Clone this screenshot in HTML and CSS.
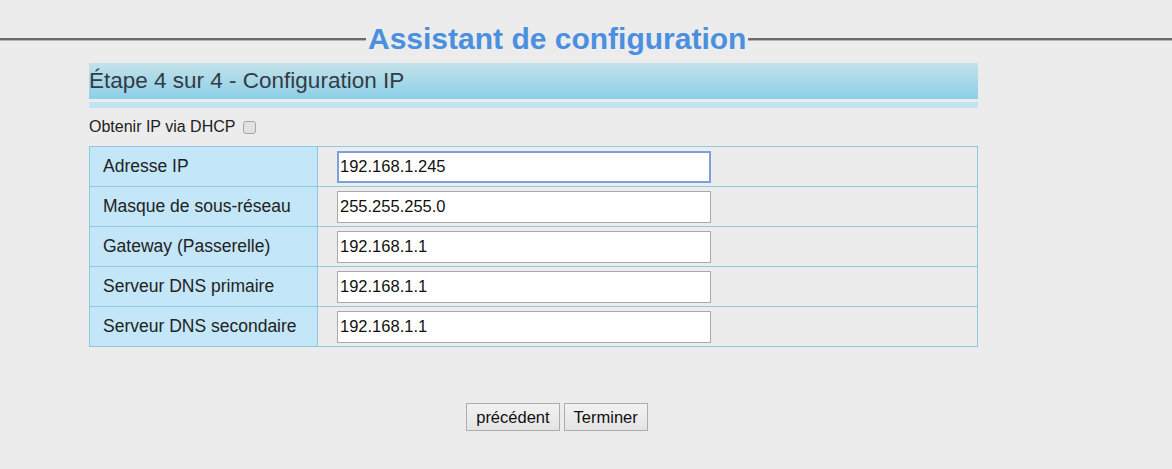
FILE: index.html
```html
<!DOCTYPE html>
<html lang="fr">
<head>
    <meta charset="UTF-8">
    <title>Assistant de configuration</title>
    <link rel="stylesheet" href="styles.css">
</head>
<body>
    <div class="wizard-title">
        <span class="rule rule-left"></span>
        <h1>Assistant de configuration</h1>
        <span class="rule rule-right"></span>
    </div>

    <div class="step">
        <div class="step-head">Étape 4 sur 4 - Configuration IP</div>
        <div class="step-strip"></div>

        <label class="dhcp">Obtenir IP via DHCP <input type="checkbox"></label>

        <table class="ip-table">
            <tr>
                <td class="lbl">Adresse IP</td>
                <td class="val"><input type="text" class="focus" value="192.168.1.245"></td>
            </tr>
            <tr>
                <td class="lbl">Masque de sous-réseau</td>
                <td class="val"><input type="text" value="255.255.255.0"></td>
            </tr>
            <tr>
                <td class="lbl">Gateway (Passerelle)</td>
                <td class="val"><input type="text" value="192.168.1.1"></td>
            </tr>
            <tr>
                <td class="lbl">Serveur DNS primaire</td>
                <td class="val"><input type="text" value="192.168.1.1"></td>
            </tr>
            <tr>
                <td class="lbl">Serveur DNS secondaire</td>
                <td class="val"><input type="text" value="192.168.1.1"></td>
            </tr>
        </table>
    </div>

    <div class="actions">
        <button class="btn">précédent</button>
        <button class="btn">Terminer</button>
    </div>
</body>
</html>
```

FILE: styles.css
```css
* {
    margin: 0;
    padding: 0;
    box-sizing: border-box;
}

body {
    font-family: "Liberation Sans", Arial, sans-serif;
    background-color: #ececec;
    color: #222;
    width: 1172px;
    height: 469px;
    overflow: hidden;
}

/* Titre avec lignes */
.wizard-title {
    display: flex;
    align-items: center;
    padding-top: 22px;
    height: 56px;
}

.rule {
    background-color: #6b6b6b;
    border-bottom: 1px solid #b5b5b5;
    height: 3px;
}

.rule-left {
    width: 366px;
}

.rule-right {
    flex: 1;
}

.wizard-title h1 {
    font-size: 30px;
    font-weight: bold;
    color: #4a8fe0;
    padding: 0 2px;
    line-height: 34px;
}

/* Bloc étape */
.step {
    width: 889px;
    margin-left: 89px;
    margin-top: 7px;
}

.step-head {
    height: 36px;
    line-height: 36px;
    font-size: 22.5px;
    color: #333c44;
    background: linear-gradient(to bottom, #c3e2ea, #8ccfe7);
}

.step-strip {
    height: 6px;
    margin-top: 3px;
    background-color: #c2e4f0;
}

.dhcp {
    display: flex;
    align-items: center;
    gap: 4px;
    font-size: 16px;
    height: 20px;
    margin-top: 9px;
    margin-bottom: 9px;
    color: #222;
}

.dhcp input {
    appearance: none;
    width: 13px;
    height: 13px;
    margin: 0 0 0 4px;
    border: 1px solid #a6a6a6;
    border-radius: 3px;
    background-color: #e2e2e2;
}

.ip-table {
    width: 100%;
    border-collapse: collapse;
    border: 1px solid #8cc9df;
}

.ip-table td {
    border: 1px solid #8cc9df;
    height: 40px;
    font-size: 17.5px;
}

.ip-table .lbl {
    width: 228px;
    background-color: #c3e6f8;
    padding: 0 0 1px 13px;
}

.ip-table .val {
    padding-left: 19px;
}

.val input {
    width: 374px;
    height: 32px;
    border: 1px solid #a9a9a9;
    background-color: #fff;
    font-family: "Liberation Sans", Arial, sans-serif;
    font-size: 16.5px;
    color: #111;
    padding: 0 2px;
    display: block;
}

.val input.focus {
    border: 2px solid #7ca0dc;
    padding: 0 1px;
}

/* Boutons */
.actions {
    width: 1114px;
    display: flex;
    justify-content: center;
    gap: 4px;
    margin-top: 56px;
}

.btn {
    font-family: "Liberation Sans", Arial, sans-serif;
    font-size: 16.5px;
    color: #111;
    height: 28px;
    padding: 0 9px;
    border: 1px solid #adadad;
    background: linear-gradient(to bottom, #f2f2f2, #e4e4e4);
    cursor: pointer;
}
```
